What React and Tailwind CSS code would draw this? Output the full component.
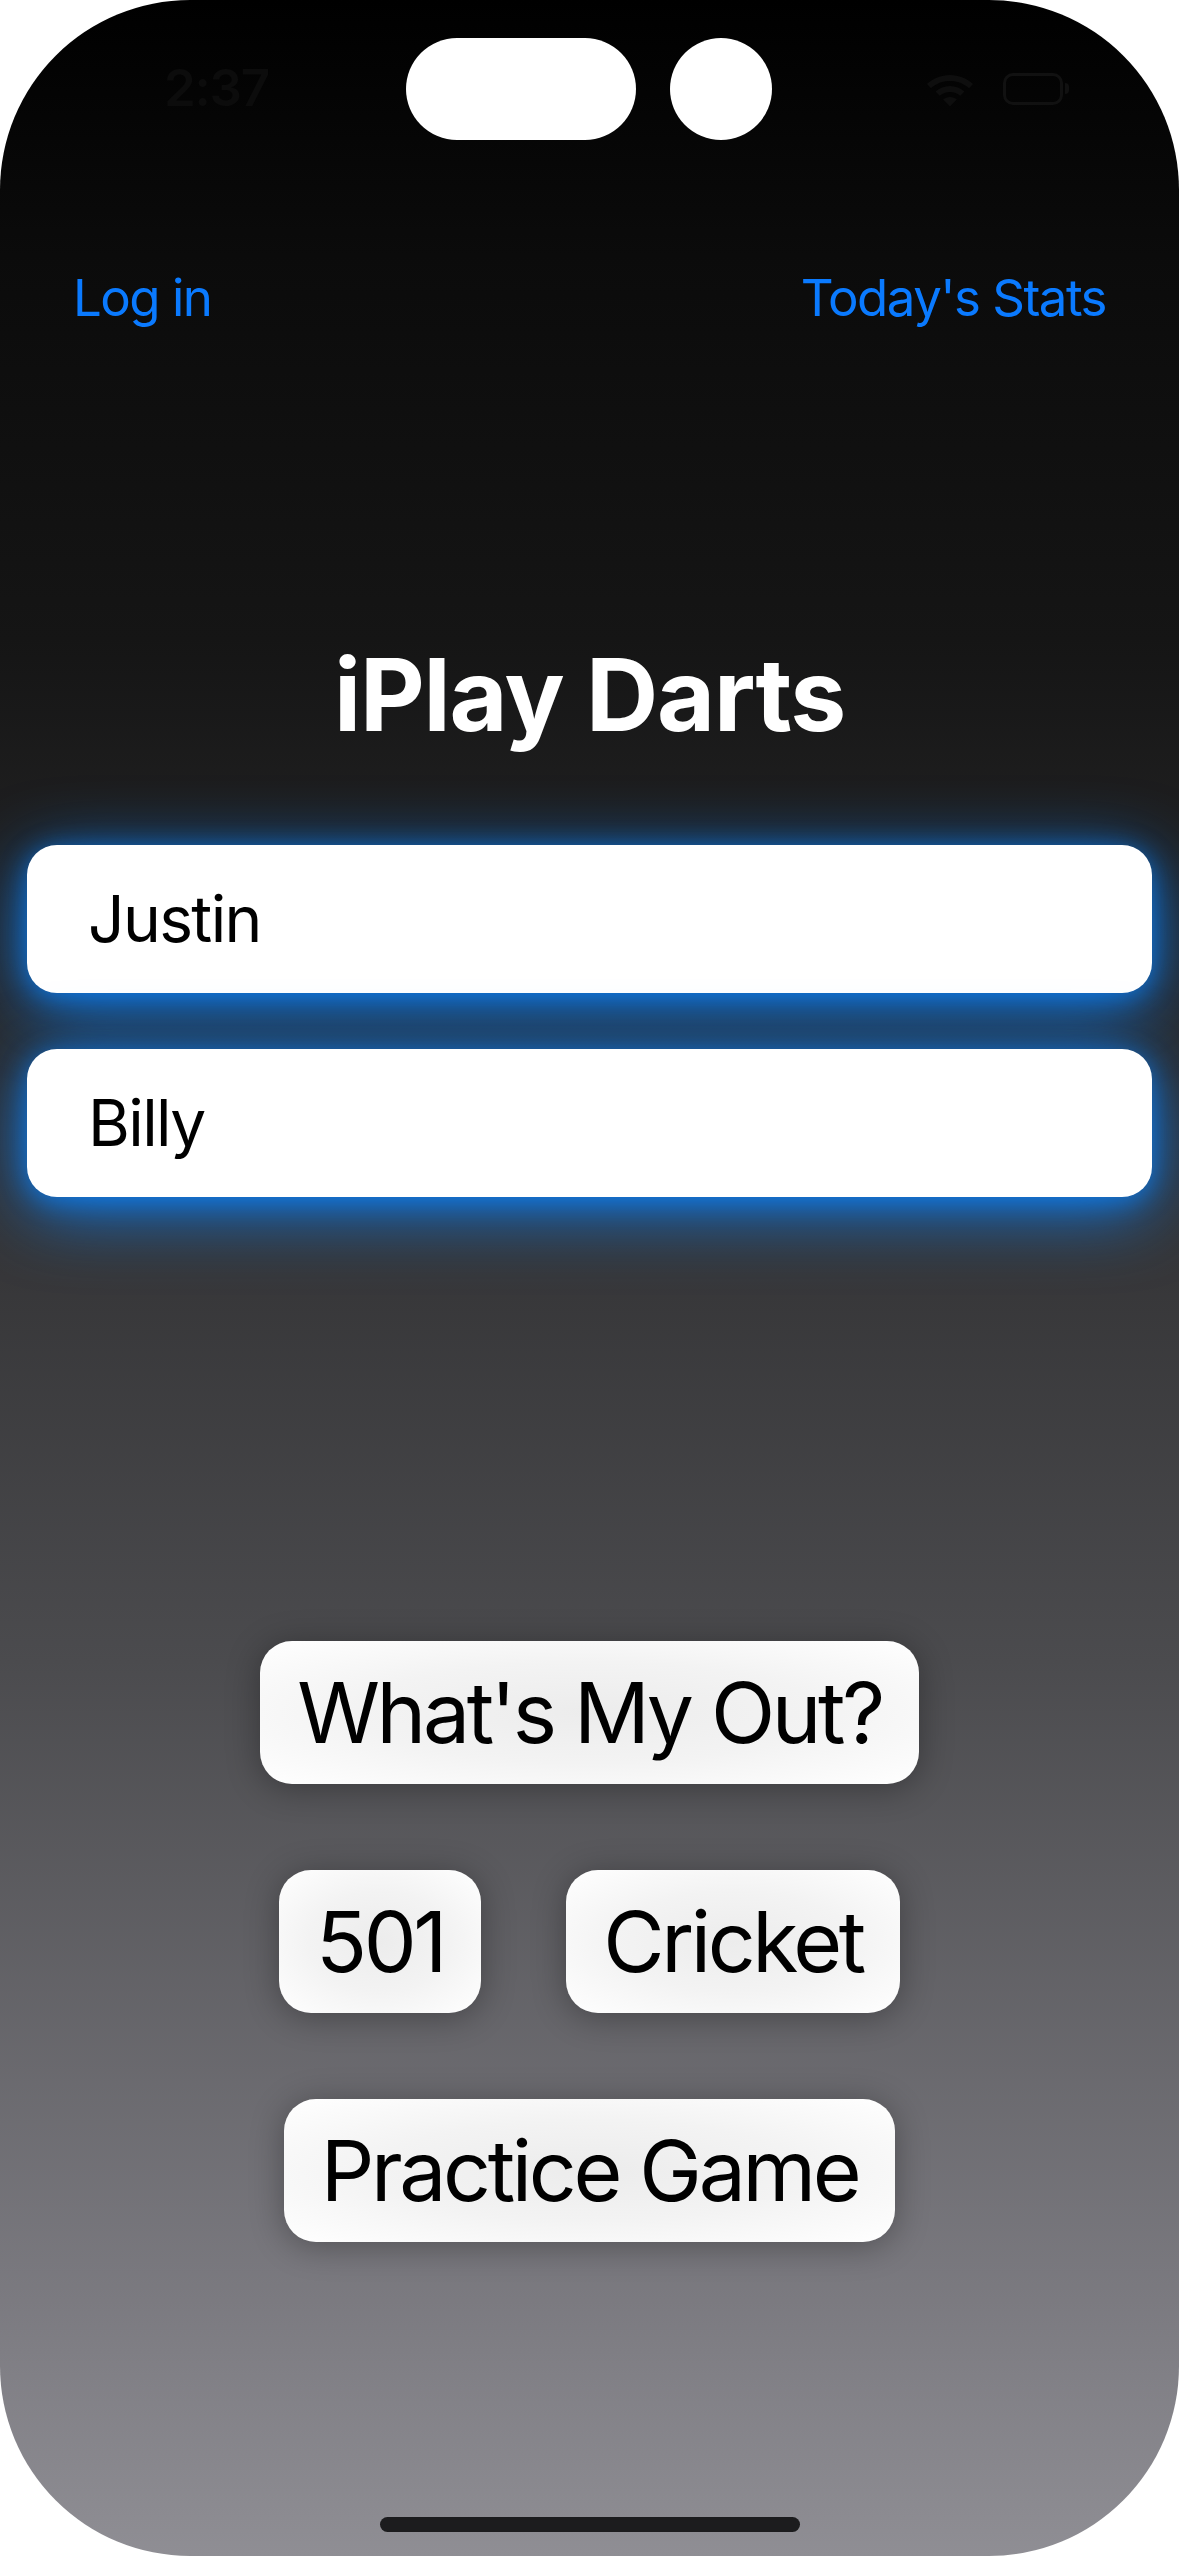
import React from 'react';

const font = { fontFamily: 'Inter, "Noto Sans", sans-serif' };

function StatusBar() {
  return (
    <div className="relative h-[177px] flex items-center justify-between pl-[164px] pr-[110px]">
      <span className="text-[51px] font-semibold text-[#0c0c0c] tracking-tight">2:37</span>
      <div className="flex items-center gap-[28px]">
        <svg width="50" height="36" viewBox="0 0 50 36" fill="#0e0e0e">
          <path d="M25 4C16 4 8 7.5 2 13l4 4.2C11 12.6 17.7 10 25 10s14 2.6 19 7.2L48 13C42 7.5 34 4 25 4z" />
          <path d="M25 15c-5.6 0-10.6 2.1-14.4 5.6l4.1 4.2c2.7-2.4 6.3-3.9 10.3-3.9s7.6 1.5 10.3 3.9l4.1-4.2C35.6 17.1 30.6 15 25 15z" />
          <path d="M25 26c-2.6 0-5 1-6.8 2.6L25 35.5l6.8-6.9C30 27 27.6 26 25 26z" />
        </svg>
        <div className="flex items-center">
          <div className="w-[60px] h-[32px] rounded-[10px] border-[3px] border-[#111]" />
          <div className="w-[4px] h-[11px] rounded-r-full bg-[#111] ml-[2px]" />
        </div>
      </div>
      {/* dynamic island */}
      <div className="absolute top-[38px] left-[406px] flex items-center gap-[34px]">
        <div className="w-[230px] h-[102px] rounded-full bg-white" />
        <div className="w-[102px] h-[102px] rounded-full bg-white" />
      </div>
    </div>
  );
}

function NameField({ value, className = '' }) {
  return (
    <div
      className={`mx-[27px] h-[148px] rounded-[30px] bg-white flex items-center pl-[61px] shadow-[0_14px_70px_rgba(10,132,255,0.85),0_4px_24px_rgba(10,132,255,0.6)] ${className}`}
    >
      <span className="text-[64px] text-black tracking-[-0.025em]">{value}</span>
    </div>
  );
}

function GameButton({ label }) {
  return (
    <button className="h-[143px] px-[37px] rounded-[32px] bg-[radial-gradient(ellipse_at_center,#ececec_0%,#f3f3f3_50%,#ffffff_100%)] text-black text-[84px] leading-none tracking-[-0.04em] flex items-center shadow-[0_4px_34px_rgba(0,0,0,0.32)]">
      {label}
    </button>
  );
}

export default function App() {
  return (
    <div className="w-[1179px] h-[2556px] bg-white" style={font}>
      <div className="w-full h-full rounded-[190px] overflow-hidden flex flex-col bg-[linear-gradient(to_bottom,#000000_0%,#0b0b0b_10%,#151515_25%,#333335_47%,#4b4b4e_65%,#7b7a80_90%,#8f8e94_100%)]">
        <StatusBar />

        <nav className="mt-[90px] flex justify-between px-[73px] text-[51px] leading-[62px] tracking-[-0.03em] text-[#0a7aff]">
          <span>Log in</span>
          <span>Today's Stats</span>
        </nav>

        <h1 className="mt-[306px] text-center text-white text-[100px] leading-[120px] font-bold tracking-[-0.012em]">
          iPlay Darts
        </h1>

        <NameField value="Justin" className="mt-[90px]" />
        <NameField value="Billy" className="mt-[56px]" />

        <div className="mt-[444px] flex flex-col items-center gap-[86px]">
          <GameButton label="What's My Out?" />
          <div className="flex gap-[85px]">
            <GameButton label="501" />
            <GameButton label="Cricket" />
          </div>
          <GameButton label="Practice Game" />
        </div>

        <div className="mt-auto mb-[24px] mx-auto w-[420px] h-[15px] rounded-full bg-[#1c1c1e]" />
      </div>
    </div>
  );
}
